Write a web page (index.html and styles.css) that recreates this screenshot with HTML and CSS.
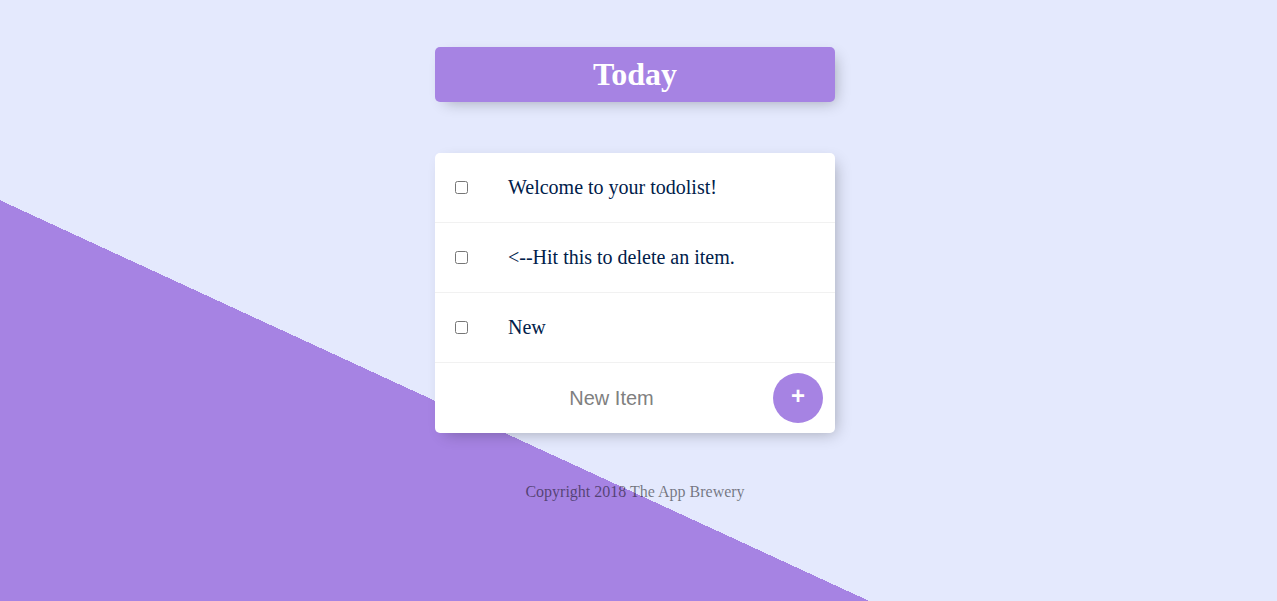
FILE: index.html
```html
<!DOCTYPE html>
<html lang="en">
<head>
<meta charset="utf-8">
<title>To-Do List</title>
<link rel="stylesheet" href="styles.css">
</head>
<body>
  <div class="box heading">
    <h1 class="title">Today</h1>
  </div>
  <div class="box list">
    <div class="item">
      <input class="check" type="checkbox">
      <p class="text">Welcome to your todolist!</p>
    </div>
    <div class="item">
      <input class="check" type="checkbox">
      <p class="text">&lt;--Hit this to delete an item.</p>
    </div>
    <div class="item">
      <input class="check" type="checkbox">
      <p class="text">New</p>
    </div>
    <form class="item add-form">
      <input class="new-item" type="text" name="newItem" placeholder="New Item" autocomplete="off">
      <button class="add-btn" type="button">+</button>
    </form>
  </div>
  <footer class="footer">Copyright 2018 The App Brewery</footer>
</body>
</html>
```

FILE: styles.css
```css
html {
  height: 100%;
  overflow: hidden;
  background-color: #E4E9FD;
  background-image: linear-gradient(24.75deg, #A683E3 50%, #E4E9FD 50%);
  background-size: 1270px 986px;
  background-repeat: no-repeat;
  font-family: "Liberation Serif", "Times New Roman", serif;
}

body {
  margin: 0;
  padding: 47px 7px 0 0;
}

.box {
  width: 400px;
  margin: 0 auto;
  background: #ffffff;
  border-radius: 5px;
  box-shadow: 5px 5px 15px -5px rgba(0, 0, 0, 0.3);
}

.heading {
  background-color: #A683E3;
  text-align: center;
  margin-bottom: 51px;
}

.title {
  margin: 0;
  padding: 9px 10px;
  color: #ffffff;
  font-size: 32px;
  line-height: 37px;
  font-weight: bold;
}

.list {
  margin-bottom: 50px;
}

.item {
  min-height: 70px;
  display: flex;
  align-items: center;
  border-bottom: 1px solid #F1F1F1;
  box-sizing: border-box;
}

.item:last-child {
  border-bottom: 0;
}

.check {
  width: 13px;
  height: 13px;
  margin: 20px;
  flex: none;
}

.text {
  margin: 0;
  padding: 20px;
  font-size: 20px;
  font-weight: 200;
  color: #00204a;
}

.add-form {
  margin: 0 0 0 20px;
}

.new-item {
  text-align: center;
  height: 60px;
  border: none;
  background: transparent;
  font-family: "Liberation Sans", Arial, sans-serif;
  font-size: 20px;
  font-weight: 200;
  width: 313px;
  padding: 0;
  margin: 0;
  outline: none;
}

.new-item::placeholder {
  color: grey;
  opacity: 1;
}

.add-btn {
  height: 50px;
  width: 50px;
  margin-left: 5px;
  border-radius: 50%;
  border: 0;
  background-color: #A683E3;
  color: #ffffff;
  font-family: "Liberation Sans", Arial, sans-serif;
  font-size: 24px;
  font-weight: bold;
  line-height: 1;
  padding: 0 0 5px 0;
}

.footer {
  color: rgba(0, 0, 0, 0.5);
  text-align: center;
  font-size: 16px;
  line-height: 18px;
}
```
